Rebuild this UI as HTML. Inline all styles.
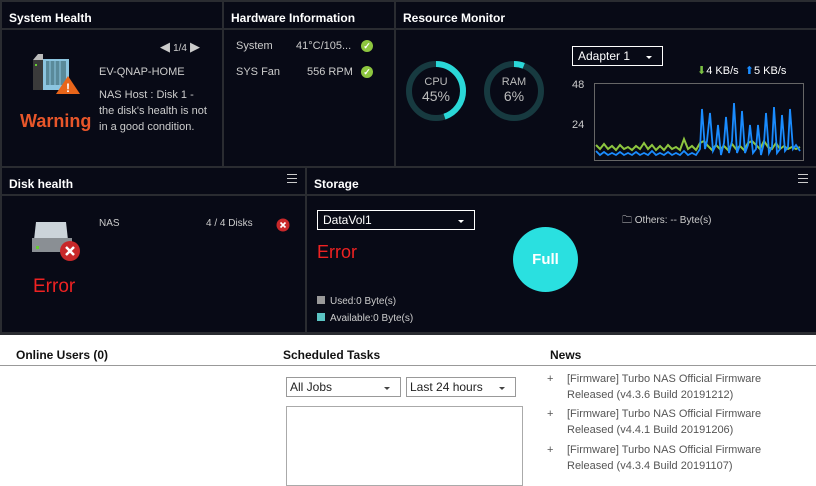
<!DOCTYPE html>
<html><head><meta charset="utf-8"><style>
*{margin:0;padding:0;box-sizing:border-box}
body{width:816px;height:481px;overflow:hidden;background:#fff;font-family:"Liberation Sans",sans-serif;position:relative}
.dark{position:absolute;left:0;top:0;width:816px;height:335px;background:#2a2c31}
.p{position:absolute;background:#080a16;color:#ccc}
.h{position:absolute;left:0;top:0;right:0;height:28px;border-bottom:2px solid #2a2c31;color:#fff;font-weight:bold;font-size:12px;padding:9px 0 0 7px}
.t{position:absolute;font-size:11px;color:#ccc;white-space:nowrap}
.menu{position:absolute;right:8px;top:6px;width:10px;height:9px;border-top:1px solid #ccc;border-bottom:1px solid #ccc}
.menu:after{content:"";position:absolute;left:0;right:0;top:3px;border-top:1px solid #ccc}
.sel{position:absolute;border:1px solid #fff;color:#fff;font-size:12px;padding:2px 5px}
.sel:after{content:"";position:absolute;right:10px;top:9px;border:3px solid transparent;border-top:3px solid #fff}
.wsel{position:absolute;border:1px solid #999;color:#222;font-size:12px;padding:2px 3px;height:20px}
.wsel:after{content:"";position:absolute;right:10px;top:9px;border:3px solid transparent;border-top:3px solid #444}
.ok{position:absolute;width:12px;height:12px;border-radius:50%;background:#8dc63f;color:#fff;font-size:9px;text-align:center;line-height:12px;font-weight:bold}
.b{position:absolute;font-size:12px;font-weight:bold;color:#111}
.n{position:absolute;font-size:11px;color:#555;line-height:16px}
</style></head><body>
<div class="dark"></div>
<div class="p" style="left:2px;top:2px;width:220px;height:164px">
<div class="h">System Health</div>
<div class="t" style="left:158px;top:37px;color:#ccc"><span style="color:#ccc;font-size:13px">◀</span> <span style="font-size:10px">1/4</span> <span style="font-size:13px">▶</span></div>
<svg style="position:absolute;left:28px;top:52px" width="52" height="46">
<rect x="3" y="6" width="10" height="30" fill="#3a3a3a"/><polygon points="3,6 8,0 13,0 13,6" fill="#bbb"/>
<rect x="13" y="5" width="26" height="31" fill="#8cc5e0"/><rect x="16" y="7" width="20" height="24" fill="#5a8a9a"/>
<line x1="20" y1="7" x2="20" y2="31" stroke="#8cc5e0"/><line x1="25" y1="7" x2="25" y2="31" stroke="#8cc5e0"/><line x1="30" y1="7" x2="30" y2="31" stroke="#8cc5e0"/>
<rect x="5" y="10" width="2" height="2" fill="#6c3"/>
<polygon points="38,22 50,40 26,40" fill="#e8651a"/><text x="36" y="38" fill="#fff" font-size="12" font-weight="bold" font-family="Liberation Sans">!</text></svg>
<div style="position:absolute;left:18px;top:109px;color:#e8562a;font-size:18px;font-weight:bold">Warning</div>
<div class="t" style="left:97px;top:64px">EV-QNAP-HOME</div>
<div class="t" style="left:97px;top:85px;line-height:16px">NAS Host : Disk 1 -<br>the disk's health is not<br>in a good condition.</div>
</div>
<div class="p" style="left:224px;top:2px;width:170px;height:164px">
<div class="h">Hardware Information</div>
<div class="t" style="left:12px;top:38px">System</div><div class="t" style="left:72px;top:38px">41°C/105...</div><div class="ok" style="left:137px;top:38px">✓</div>
<div class="t" style="left:12px;top:64px">SYS Fan</div><div class="t" style="left:83px;top:64px">556 RPM</div><div class="ok" style="left:137px;top:64px">✓</div>
</div>
<div class="p" style="left:396px;top:2px;width:420px;height:164px">
<div class="h">Resource Monitor</div>
<svg style="position:absolute;left:8px;top:57px" width="64" height="64"><circle cx="32" cy="32" r="27" fill="none" stroke="#173a40" stroke-width="6"/><circle cx="32" cy="32" r="27" fill="none" stroke="#2ad8d8" stroke-width="6" stroke-dasharray="76 200" transform="rotate(-90 32 32)"/><text x="32" y="26" fill="#bbb" font-size="11" text-anchor="middle" font-family="Liberation Sans">CPU</text><text x="32" y="42" fill="#bbb" font-size="14" text-anchor="middle" font-family="Liberation Sans">45%</text></svg>
<svg style="position:absolute;left:86px;top:57px" width="64" height="64"><circle cx="32" cy="32" r="27" fill="none" stroke="#173a40" stroke-width="6"/><circle cx="32" cy="32" r="27" fill="none" stroke="#2ad8d8" stroke-width="6" stroke-dasharray="10 200" transform="rotate(-90 32 32)"/><text x="32" y="26" fill="#bbb" font-size="11" text-anchor="middle" font-family="Liberation Sans">RAM</text><text x="32" y="42" fill="#bbb" font-size="14" text-anchor="middle" font-family="Liberation Sans">6%</text></svg>
<div class="sel" style="left:176px;top:44px;width:91px;height:20px">Adapter 1</div>
<div class="t" style="left:301px;top:62px;color:#fff"><span style="color:#7bc143">⬇</span>4 KB/s &nbsp;<span style="color:#1a8cff">⬆</span>5 KB/s</div>
<div class="t" style="left:176px;top:77px">48</div><div class="t" style="left:176px;top:117px">24</div>
<svg style="position:absolute;left:198px;top:81px" width="210" height="78"><rect x=".5" y=".5" width="209" height="77" fill="none" stroke="#666"/>
<polyline fill="none" stroke="#8dc63f" stroke-width="2" points="2,62 6,66 10,61 14,66 18,63 22,67 26,62 30,66 34,64 38,67 42,63 46,66 50,60 54,66 58,62 62,67 66,63 70,67 74,62 78,66 82,64 86,67 90,56 94,66 98,63 102,67 106,60 110,58 114,63 118,67 122,62 126,66 130,63 134,67 138,61 142,66 146,63 150,67 154,60 158,58 162,62 166,66 170,58 174,64 178,66 182,60 186,66 190,63 194,66 198,64 202,66 206,64"/>
<polyline fill="none" stroke="#1a8cff" stroke-width="1.8" points="2,68 6,72 10,69 14,72 18,70 22,72 26,69 30,72 34,70 38,72 42,69 46,72 50,70 54,72 58,68 62,72 66,70 70,72 74,69 78,72 82,70 86,72 90,68 94,72 98,70 102,72 106,66 108,26 111,66 113,58 116,30 119,68 122,62 124,42 127,72 130,60 132,34 135,70 138,58 140,20 143,70 146,62 148,28 151,70 154,62 156,42 159,70 162,66 164,42 167,72 170,60 172,30 175,70 178,64 180,24 183,70 186,66 188,32 191,68 194,64 196,26 199,66 202,62 206,68"/></svg>
</div>
<div class="p" style="left:2px;top:168px;width:303px;height:164px">
<div class="h">Disk health</div><div class="menu"></div>
<svg style="position:absolute;left:28px;top:52px" width="52" height="44"><polygon points="6,2 36,2 38,20 4,20" fill="#ccd4da"/><rect x="2" y="18" width="40" height="14" fill="#8a8f94"/><rect x="6" y="26" width="3" height="3" fill="#6c3"/><circle cx="40" cy="31" r="10" fill="#c8282a"/><path d="M36 27l8 8M44 27l-8 8" stroke="#fff" stroke-width="2.5"/></svg>
<div style="position:absolute;left:31px;top:108px;color:#ee2222;font-size:19px">Error</div>
<div class="t" style="left:97px;top:50px;font-size:10px">NAS</div>
<div class="t" style="left:204px;top:50px;font-size:10px">4 / 4 Disks</div>
<svg style="position:absolute;left:274px;top:50px" width="14" height="14"><circle cx="7" cy="7" r="6.5" fill="#c8282a"/><path d="M4.5 4.5l5 5M9.5 4.5l-5 5" stroke="#fff" stroke-width="1.6"/></svg>
</div>
<div class="p" style="left:307px;top:168px;width:509px;height:164px">
<div class="h">Storage</div><div class="menu"></div>
<div class="sel" style="left:10px;top:42px;width:158px;height:20px">DataVol1</div>
<div style="position:absolute;left:10px;top:74px;color:#ee2222;font-size:18px">Error</div>
<div style="position:absolute;left:206px;top:59px;width:65px;height:65px;border-radius:50%;background:#2ae0e0;color:#fff;font-weight:bold;font-size:15px;text-align:center;line-height:65px">Full</div>
<div class="t" style="left:315px;top:45px;font-size:10px">🗀 Others: -- Byte(s)</div>
<div class="t" style="left:10px;top:128px;font-size:10px"><span style="display:inline-block;width:8px;height:8px;background:#999;margin-right:5px"></span>Used:0 Byte(s)</div>
<div class="t" style="left:10px;top:145px;font-size:10px"><span style="display:inline-block;width:8px;height:8px;background:#5bc4c4;margin-right:5px"></span>Available:0 Byte(s)</div>
</div>
<div style="position:absolute;left:0;top:365px;width:816px;border-top:1px solid #999"></div>
<div class="b" style="left:16px;top:348px">Online Users (0)</div>
<div class="b" style="left:283px;top:348px">Scheduled Tasks</div>
<div class="b" style="left:550px;top:348px">News</div>
<div class="wsel" style="left:286px;top:377px;width:115px">All Jobs</div>
<div class="wsel" style="left:406px;top:377px;width:110px">Last 24 hours</div>
<div style="position:absolute;left:286px;top:406px;width:237px;height:80px;border:1px solid #aaa"></div>
<div class="n" style="left:547px;top:371px">+</div><div class="n" style="left:567px;top:371px">[Firmware] Turbo NAS Official Firmware<br>Released (v4.3.6 Build 20191212)</div>
<div class="n" style="left:547px;top:406px">+</div><div class="n" style="left:567px;top:406px">[Firmware] Turbo NAS Official Firmware<br>Released (v4.4.1 Build 20191206)</div>
<div class="n" style="left:547px;top:442px">+</div><div class="n" style="left:567px;top:442px">[Firmware] Turbo NAS Official Firmware<br>Released (v4.3.4 Build 20191107)</div>
</body></html>
